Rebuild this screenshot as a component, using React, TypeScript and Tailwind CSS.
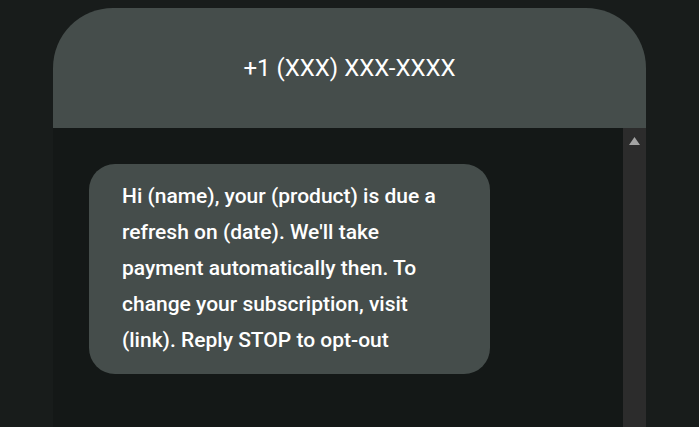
import React from 'react';

export default function App() {
  return (
    <div className="w-[699px] h-[427px] overflow-hidden bg-[#181c1b] pt-[8px] pl-[53px] font-['Roboto',sans-serif]">
      <div className="w-[593px] h-[419px] flex flex-col">
        <div className="h-[120px] shrink-0 rounded-t-[60px] bg-[#454d4b] flex items-center justify-center">
          <span className="text-[24px] text-white">+1 (XXX) XXX-XXXX</span>
        </div>
        <div className="flex flex-1">
          <div className="flex-1 bg-[#141817] pt-[36px] pl-[36px]">
            <div className="w-[401px] h-[210px] rounded-[26px] bg-[#454d4b] pl-[33px] pt-[14px]">
              <p className="text-[21px] leading-[36px] font-medium text-white">
                Hi (name), your (product) is due a<br />
                refresh on (date). We'll take<br />
                payment automatically then. To<br />
                change your subscription, visit<br />
                (link). Reply STOP to opt-out
              </p>
            </div>
          </div>
          <div className="w-[23px] bg-[#2c2c2c] flex justify-center pt-[9px]">
            <svg width="11" height="8" viewBox="0 0 11 8">
              <path d="M5.5 0 L11 8 L0 8 Z" fill="#a3a3a3" />
            </svg>
          </div>
        </div>
      </div>
    </div>
  );
}
